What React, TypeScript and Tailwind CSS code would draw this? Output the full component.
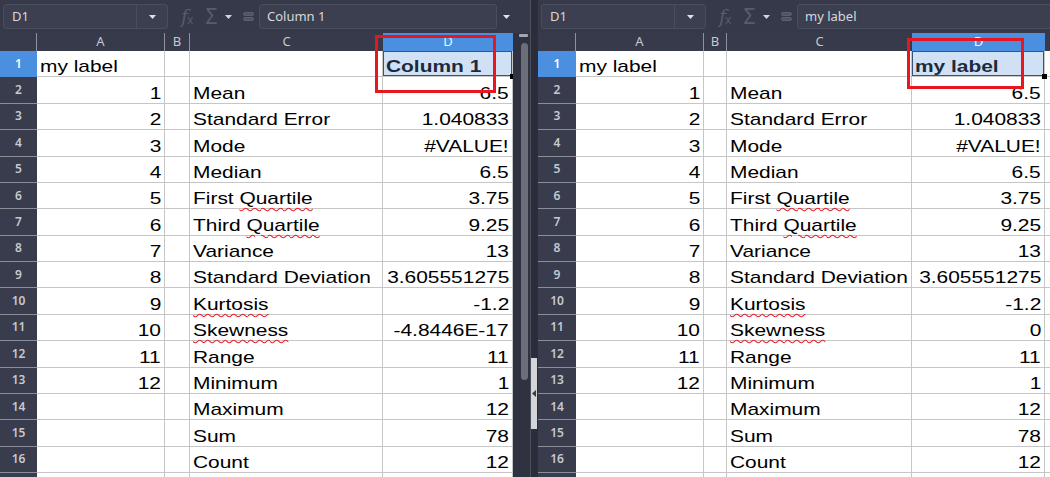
import type { ReactNode } from 'react';

type Label = { text: string; wavy?: string };

const LABELS: Label[] = [
    { text: 'Mean' },
    { text: 'Standard Error' },
    { text: 'Mode' },
    { text: 'Median' },
    { text: 'First ', wavy: 'Quartile' },
    { text: 'Third ', wavy: 'Quartile' },
    { text: 'Variance' },
    { text: 'Standard Deviation' },
    { text: '', wavy: 'Kurtosis' },
    { text: '', wavy: 'Skewness' },
    { text: 'Range' },
    { text: 'Minimum' },
    { text: 'Maximum' },
    { text: 'Sum' },
    { text: 'Count' },
];

const LEFT_VALUES = ['6.5', '1.040833', '#VALUE!', '6.5', '3.75', '9.25', '13', '3.605551275', '-1.2', '-4.8446E-17', '11', '1', '12', '78', '12'];
const RIGHT_VALUES = ['6.5', '1.040833', '#VALUE!', '6.5', '3.75', '9.25', '13', '3.605551275', '-1.2', '0', '11', '1', '12', '78', '12'];

// row 17 is only a few pixels tall at the bottom edge
const ROWS = Array.from({ length: 17 }, (_, i) => i + 1);

function Caret({ light }: { light?: boolean }) {
    return (
        <svg width="7" height="4" viewBox="0 0 7 4">
            <path d="M0 0h7L3.5 4z" fill={light ? '#d4d6db' : '#dfe1e6'} />
        </svg>
    );
}

function Toolbar({ formula, arrow }: { formula: string; arrow?: boolean }) {
    return (
        <div className="flex h-[33px] shrink-0 items-center bg-[#363949] pl-[3px] font-['Noto_Sans',sans-serif]">
            {/* name box */}
            <div className="flex h-[25px] w-[165px] shrink-0 items-center rounded-[3px] border border-[#4a4d5b] bg-[#3c3f4f]">
                <span className="flex-1 pl-[8px] text-[13px] text-[#d6d8dd]">D1</span>
                <div className="flex h-full w-[31px] items-center justify-center border-l border-[#4a4d5b]">
                    <Caret />
                </div>
            </div>
            <span className="ml-[13px] flex w-[16px] shrink-0 items-end text-[#585c6b]">
                <span className="font-['DejaVu_Serif',serif] text-[19px] italic leading-none">f</span>
                <span className="-ml-[1px] text-[12px] leading-none">x</span>
            </span>
            <span className="ml-[7px] flex w-[15px] shrink-0 justify-center text-[21px] leading-none text-[#585c6b]">Σ</span>
            <span className="ml-[6px] flex w-[7px] shrink-0 items-center"><Caret light /></span>
            <svg className="ml-[11px] shrink-0" width="11" height="9" viewBox="0 0 11 9">
                <rect x="0.5" y="0.5" width="10" height="3" rx="1.5" fill="#50545f" stroke="#5c606d" />
                <rect x="0.5" y="5.5" width="10" height="3" rx="1.5" fill="#50545f" stroke="#5c606d" />
            </svg>
            <div className={`ml-[5px] flex h-[25px] shrink-0 items-center rounded-[3px] border border-[#4a4d5b] bg-[#3c3f4f] ${arrow ? 'w-[238px]' : 'w-[300px]'}`}>
                <span className="pl-[7px] text-[13px] text-[#d6d8dd]">{formula}</span>
            </div>
            {arrow && (
                <span className="ml-[6px] flex items-center"><Caret /></span>
            )}
        </div>
    );
}

function Cell({ w, right, children }: { w: string; right?: boolean; children?: ReactNode }) {
    return (
        <div className={`${w} flex shrink-0 items-end border-r border-b border-[#c6c6c6] pb-[1px] ${right ? 'justify-end pr-[3px]' : 'justify-start pl-[3px]'}`}>
            {children !== undefined && children !== '' && (
                <span className={`inline-block whitespace-nowrap font-['Liberation_Sans',Arial,sans-serif] text-[17px] leading-none text-black scale-x-[1.23] ${right ? 'origin-right' : 'origin-left'}`}>
                    {children}
                </span>
            )}
        </div>
    );
}

function LabelText({ l }: { l: Label }) {
    return (
        <>
            {l.text}
            {l.wavy && (
                <span className="underline decoration-wavy decoration-[#e8202a] decoration-1 underline-offset-[3px]">{l.wavy}</span>
            )}
        </>
    );
}

function Sheet({ cols, d1, values, extra }: { cols: string[]; d1: string; values: string[]; extra?: string }) {
    const [wh, wa, wb, wc, wd] = cols;
    return (
        <div className="flex min-w-0 flex-1 flex-col overflow-hidden bg-white">
            {/* column headers */}
            <div className="flex h-[18px] shrink-0 bg-[#373a4a] font-['Noto_Sans',sans-serif] text-[13px] text-[#c5c8cf]">
                <div className={`${wh} shrink-0 border-r border-[#8f929c]`} />
                <div className={`${wa} flex shrink-0 items-center justify-center border-r border-[#8f929c]`}>A</div>
                <div className={`${wb} flex shrink-0 items-center justify-center border-r border-[#8f929c]`}>B</div>
                <div className={`${wc} flex shrink-0 items-center justify-center`}>C</div>
                <div className={`${wd} flex shrink-0 items-center justify-center bg-[#4a8fe0] text-[#eef4fc]`}>D</div>
                {extra && <div className={`${extra} shrink-0`} />}
            </div>

            {ROWS.map((n) => {
                const label = n >= 2 ? LABELS[n - 2] : undefined;
                const value = n >= 2 ? values[n - 2] : undefined;
                const a = n === 1 ? 'my label' : n <= 13 ? String(n - 1) : '';
                return (
                    <div key={n} className="flex h-[26.375px] shrink-0">
                        <div
                            className={`${wh} flex shrink-0 items-center justify-center border-b font-['Noto_Sans',sans-serif] text-[12px] font-semibold ${
                                n === 1 ? 'border-[#4a8fe0] bg-[#4a8fe0] text-white' : 'border-[#8c8f99] bg-[#393c4d] text-[#c6c9d0]'
                            }`}
                        >
                            {n < 17 ? n : ''}
                        </div>
                        <Cell w={wa} right={n !== 1}>{a}</Cell>
                        <Cell w={wb} />
                        <Cell w={wc}>{label && <LabelText l={label} />}</Cell>
                        {n === 1 ? (
                            <div className={`${wd} relative flex shrink-0 items-end border-r border-b border-[#c6c6c6] pb-[1px] pl-[3px]`}>
                                <div className="absolute inset-0 border border-[#35557c] bg-[#d0e1f5]" />
                                <span className="relative inline-block origin-left scale-x-[1.23] whitespace-nowrap font-['Liberation_Sans',Arial,sans-serif] text-[17px] font-bold leading-none text-[#1b2a3c]">
                                    {d1}
                                </span>
                                <div className="absolute -right-[3px] -bottom-[3px] z-10 h-[5px] w-[5px] bg-black" />
                            </div>
                        ) : (
                            <Cell w={wd} right>{value}</Cell>
                        )}
                        {extra && <Cell w={extra} />}
                    </div>
                );
            })}
        </div>
    );
}

export default function App() {
    return (
        <div className="flex h-[477px] w-[1050px] overflow-hidden bg-[#2b2e3a]">
            {/* left window */}
            <div className="relative flex w-[530px] shrink-0 flex-col">
                <Toolbar formula="Column 1" arrow />
                <div className="flex min-h-0 flex-1">
                    <Sheet
                        cols={['w-[37px]', 'w-[128px]', 'w-[25px]', 'w-[193px]', 'w-[130px]']}
                        d1="Column 1"
                        values={LEFT_VALUES}
                    />
                    {/* vertical scrollbar */}
                    <div className="flex w-[17px] shrink-0 flex-col items-start bg-[#2f3240] pl-[6px]">
                        <div className="mt-[1px] h-[3px] w-[9px] rounded-[1px] bg-[#a4a7af]" />
                        <div className="mt-[6px] ml-[2px] h-[337px] w-[7px] rounded-full bg-[#6b6e78]" />
                    </div>
                </div>
                <div className="absolute top-[35px] left-[375px] z-20 h-[58px] w-[121px] border-[3px] border-[#e8161e]" />
            </div>

            {/* splitter */}
            <div className="flex w-[8px] shrink-0 flex-col border-l border-[#4c4f5c] bg-[#2b2e3a]">
                <div className="mt-[358px] flex h-[71px] w-[6px] items-center bg-[#d3d5d9]">
                    <svg width="5" height="7" viewBox="0 0 5 7">
                        <path d="M5 0v7L1 3.5z" fill="#3a3d48" />
                    </svg>
                </div>
            </div>

            {/* right window */}
            <div className="relative flex min-w-0 flex-1 flex-col overflow-hidden">
                <Toolbar formula="my label" />
                <div className="flex min-h-0 flex-1">
                    <Sheet
                        cols={['w-[38px]', 'w-[128px]', 'w-[23px]', 'w-[185px]', 'w-[133px]']}
                        d1="my label"
                        values={RIGHT_VALUES}
                        extra="w-[10px]"
                    />
                </div>
                <div className="absolute top-[38px] left-[369px] z-20 h-[51px] w-[117px] border-[3px] border-[#e8161e]" />
            </div>
        </div>
    );
}
